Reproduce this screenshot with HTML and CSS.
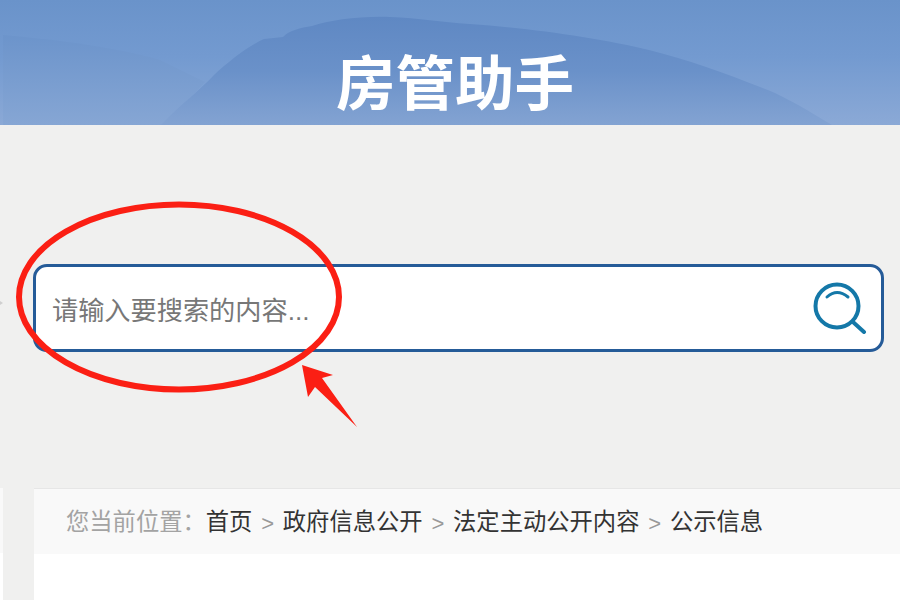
FILE: index.html
```html
<!DOCTYPE html>
<html lang="zh-CN">
  <head>
    <meta charset="UTF-8" />
    <meta name="viewport" content="width=device-width, initial-scale=1.0" />
    <title>房管助手</title>
    <link rel="stylesheet" href="styles.css">
  </head>
  <body>
    <div id="header">
      <svg class="header-bg" viewBox="0 0 900 125" aria-hidden="true">
        <defs>
          <linearGradient id="sky" x1="0" y1="0" x2="0" y2="1">
            <stop offset="0" stop-color="#6a93ca" />
            <stop offset="0.45" stop-color="#739ad0" />
            <stop offset="1" stop-color="#8ba9d6" />
          </linearGradient>
          <linearGradient id="hill" x1="0" y1="0" x2="0" y2="1">
            <stop offset="0" stop-color="#5f88c3" />
            <stop offset="0.5" stop-color="#6a91c9" />
            <stop offset="1" stop-color="#83a3d2" />
          </linearGradient>
          <linearGradient id="hill-left" x1="0" y1="0" x2="0" y2="1">
            <stop offset="0" stop-color="#6c94cb" />
            <stop offset="1" stop-color="#86a6d4" />
          </linearGradient>
        </defs>
        <rect width="900" height="125" fill="url(#sky)" />
        <path d="M3 35 C60 40 120 48 160 60 L205 82 L165 125 L3 125 Z" fill="url(#hill-left)" />
        <path d="M161 125 C180 105 200 90 214 75 C230 60 250 45 264 39 L283 37 C290 30 300 28 312 26 C330 20 360 16 390 17 C420 18 440 22 470 24 C530 28 600 38 649 50 C690 60 730 75 775 93 C800 105 815 115 832 125 Z" fill="url(#hill)" />
      </svg>
      <h1>房管助手</h1>
    </div>

    <div id="search">
      <div class="search-box">
        <input type="text" name="keyword" placeholder="请输入要搜索的内容..." />
        <svg class="search-icon" viewBox="0 0 54 52" aria-hidden="true">
          <circle cx="24" cy="24" r="21.500" fill="none" stroke="#1478a8" stroke-width="4" />
          <path d="M14 15 Q24 6 35 15" fill="none" stroke="#1478a8" stroke-width="3" stroke-linecap="round" />
          <path d="M40 40 L51 50" fill="none" stroke="#1478a8" stroke-width="4" stroke-linecap="round" />
        </svg>
      </div>
    </div>

    <div id="content">
      <div class="side-card"></div>
      <div class="main-card">
        <div class="crumbs">
          <span class="crumbs-label">您当前位置：</span>
          <a href="#">首页</a>
          <span class="sep">&gt;</span>
          <a href="#">政府信息公开</a>
          <span class="sep">&gt;</span>
          <a href="#">法定主动公开内容</a>
          <span class="sep">&gt;</span>
          <a href="#">公示信息</a>
        </div>
      </div>
    </div>

    <!-- red marks drawn over the page -->
    <svg class="marks" viewBox="0 0 900 600" aria-hidden="true">
      <ellipse cx="179" cy="297" rx="160" ry="92.500" fill="none" stroke="#fb1f14" stroke-width="6" />
      <path d="M302 365 L333 375 L322 378 L357 427 L315 387 L308 397 Z" fill="#fb1f14" />
      <path d="M0 301 L3 303 L0 305 Z" fill="#cfcfcf" />
    </svg>
  </body>
</html>
```

FILE: styles.css
```css
body {
  margin: 0;
  height: 600px;
  overflow: hidden;
  position: relative;
  background-color: #f0f0ef;
  font-family: "Liberation Sans", "Noto Sans CJK SC", sans-serif;
}

#header {
  position: relative;
  height: 125px;
  display: flex;
  justify-content: center;
  align-items: center;
  padding-left: 10px;
  padding-top: 44px;
  box-sizing: border-box;
}
.header-bg {
  position: absolute;
  top: 0;
  left: 0;
  width: 100%;
  height: 100%;
}
#header h1 {
  position: relative;
  margin: 0;
  font-size: 59.5px;
  font-weight: bold;
  line-height: 70px;
  color: #fff;
}

#search {
  padding: 139px 16px 136px 33px;
}
.search-box {
  height: 88px;
  box-sizing: border-box;
  display: flex;
  align-items: center;
  padding: 0 14px 0 16px;
  background-color: #fff;
  border: 3px solid #255b98;
  border-radius: 14px;
}
.search-box input {
  flex: 1;
  min-width: 0;
  border: none;
  outline: none;
  padding: 6px 0 0;
  font-family: inherit;
  font-size: 26.2px;
  color: #777;
}
.search-box input::placeholder {
  color: #777;
  opacity: 1;
}
.search-icon {
  width: 54px;
  height: 52px;
}

#content {
  display: flex;
  gap: 31px;
  height: 112px;
}
.side-card {
  width: 3px;
  background: linear-gradient(#f9f9f9 65px, #fff 65px);
}
.main-card {
  flex: 1;
  background-color: #fff;
  border-top: 1px solid #e6e6e6;
}
.crumbs {
  height: 65px;
  box-sizing: border-box;
  display: flex;
  align-items: center;
  padding: 0 0 3px 32px;
  background-color: #f9f9f9;
  font-size: 23.3px;
  color: #333;
}
.crumbs a {
  color: #333;
  text-decoration: none;
}
.crumbs-label {
  color: #a3a3a3;
}
.sep {
  color: #999;
  margin: 7px 8.8px 0;
  font-size: 22px;
}

.marks {
  position: absolute;
  top: 0;
  left: 0;
  width: 900px;
  height: 600px;
}
```
